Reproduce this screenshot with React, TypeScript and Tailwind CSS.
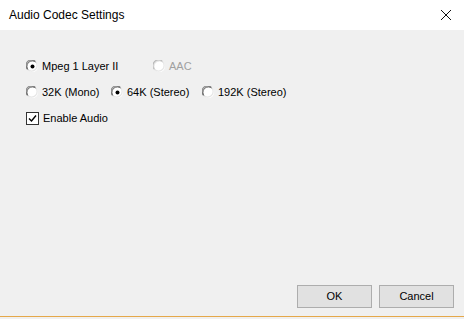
import React from "react";

const ui = { fontFamily: "'Liberation Sans', Arial, sans-serif" };

function Radio({ checked, disabled }: { checked?: boolean; disabled?: boolean }) {
  return (
    <svg width="13" height="13" viewBox="0 0 13 13" className="shrink-0">
      <circle cx="6.5" cy="6.5" r="5.5" fill="#ffffff" />
      <path d="M1.6 9.5A5.5 5.5 0 0 1 9.5 1.6" stroke={disabled ? "#b8b8b8" : "#8a8a8a"} strokeWidth="1.2" fill="none" />
      <path d="M2.5 10.2A5 5 0 0 1 10.2 2.5" stroke={disabled ? "#d8d8d8" : "#404040"} strokeWidth="0.8" fill="none" />
      <path d="M9.5 1.6A5.5 5.5 0 0 1 1.6 9.5" stroke="#e6e6e6" strokeWidth="1.2" fill="none" />
      {checked && <circle cx="6.5" cy="6.5" r="2" fill="#000000" />}
    </svg>
  );
}

function Option({ label, checked, disabled }: { label: string; checked?: boolean; disabled?: boolean }) {
  return (
    <div className="flex items-center gap-[3px]">
      <Radio checked={checked} disabled={disabled} />
      <span className={`text-[11px] leading-[13px] ${disabled ? "text-[#a0a0a0]" : "text-black"}`}>{label}</span>
    </div>
  );
}

export default function App() {
  return (
    <div className="w-[464px] h-[319px] bg-[#f0f0f0] flex flex-col" style={ui}>
      <div className="h-[30px] bg-white flex items-center justify-between pl-[9px] pr-[9px]">
        <span className="text-[12px] text-black">Audio Codec Settings</span>
        <svg width="12" height="12" viewBox="0 0 12 12" className="mr-[3px]">
          <path d="M1 1L11 11M11 1L1 11" stroke="#111" strokeWidth="1" />
        </svg>
      </div>

      <div className="flex-1 flex flex-col pl-[26px] pt-[30px]">
        <div className="flex items-center h-[13px]">
          <div className="w-[127px]">
            <Option label="Mpeg 1 Layer II" checked />
          </div>
          <Option label="AAC" disabled />
        </div>

        <div className="flex items-center h-[13px] mt-[13px]">
          <div className="w-[85px]">
            <Option label="32K (Mono)" />
          </div>
          <div className="w-[91px]">
            <Option label="64K (Stereo)" checked />
          </div>
          <Option label="192K (Stereo)" />
        </div>

        <div className="flex items-center h-[13px] mt-[13px] gap-[4px]">
          <div className="w-[13px] h-[13px] border border-[#333] bg-white flex items-center justify-center">
            <svg width="9" height="9" viewBox="0 0 9 9">
              <path d="M1 4.5L3.5 7L8 1.5" stroke="#000" strokeWidth="1.4" fill="none" />
            </svg>
          </div>
          <span className="text-[11px] leading-[13px] text-black">Enable Audio</span>
        </div>

        <div className="flex-1" />

        <div className="flex justify-end gap-[7px] pr-[10px] pb-[8px]">
          <button className="w-[75px] h-[23px] bg-[#e1e1e1] border border-[#adadad] text-[11px] text-black">OK</button>
          <button className="w-[75px] h-[23px] bg-[#e1e1e1] border border-[#adadad] text-[11px] text-black">Cancel</button>
        </div>
      </div>
      <div className="h-[1px] bg-[#e5a84a]" />
      <div className="h-[2px] bg-[#f0f0f0]" />
    </div>
  );
}
